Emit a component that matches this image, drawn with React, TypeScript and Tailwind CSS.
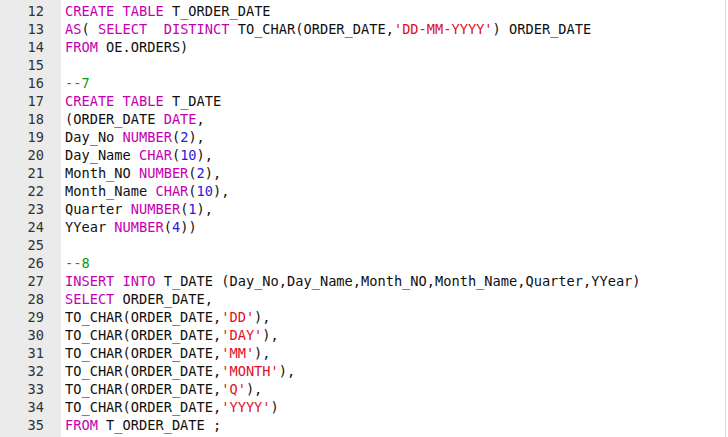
import React from "react";

type Tok = [string, string?];

const K = "k";
const N = "n";
const S = "s";
const C = "c";

const lines: { n: number; toks: Tok[] }[] = [
  { n: 12, toks: [["CREATE", K], [" "], ["TABLE", K], [" T_ORDER_DATE"]] },
  { n: 13, toks: [["AS", K], ["( "], ["SELECT", K], ["  "], ["DISTINCT", K], [" TO_CHAR(ORDER_DATE,"], ["'DD-MM-YYYY'", S], [") ORDER_DATE"]] },
  { n: 14, toks: [["FROM", K], [" OE.ORDERS)"]] },
  { n: 15, toks: [] },
  { n: 16, toks: [["--7", C]] },
  { n: 17, toks: [["CREATE", K], [" "], ["TABLE", K], [" T_DATE"]] },
  { n: 18, toks: [["(ORDER_DATE "], ["DATE", K], [","]] },
  { n: 19, toks: [["Day_No "], ["NUMBER", K], ["("], ["2", N], ["),"]] },
  { n: 20, toks: [["Day_Name "], ["CHAR", K], ["("], ["10", N], ["),"]] },
  { n: 21, toks: [["Month_NO "], ["NUMBER", K], ["("], ["2", N], ["),"]] },
  { n: 22, toks: [["Month_Name "], ["CHAR", K], ["("], ["10", N], ["),"]] },
  { n: 23, toks: [["Quarter "], ["NUMBER", K], ["("], ["1", N], ["),"]] },
  { n: 24, toks: [["YYear "], ["NUMBER", K], ["("], ["4", N], ["))"]] },
  { n: 25, toks: [] },
  { n: 26, toks: [["--8", C]] },
  { n: 27, toks: [["INSERT", K], [" "], ["INTO", K], [" T_DATE (Day_No,Day_Name,Month_NO,Month_Name,Quarter,YYear)"]] },
  { n: 28, toks: [["SELECT", K], [" ORDER_DATE,"]] },
  { n: 29, toks: [["TO_CHAR(ORDER_DATE,"], ["'DD'", S], ["),"]] },
  { n: 30, toks: [["TO_CHAR(ORDER_DATE,"], ["'DAY'", S], ["),"]] },
  { n: 31, toks: [["TO_CHAR(ORDER_DATE,"], ["'MM'", S], ["),"]] },
  { n: 32, toks: [["TO_CHAR(ORDER_DATE,"], ["'MONTH'", S], ["),"]] },
  { n: 33, toks: [["TO_CHAR(ORDER_DATE,"], ["'Q'", S], ["),"]] },
  { n: 34, toks: [["TO_CHAR(ORDER_DATE,"], ["'YYYY'", S], [")"]] },
  { n: 35, toks: [["FROM", K], [" T_ORDER_DATE ;"]] },
];

function cls(t?: string) {
  if (t === K) return "text-[#c400b0]";
  if (t === N) return "text-[#2a20d8]";
  if (t === S) return "text-[#e0102a]";
  if (t === C) return "text-[#0a9a10]";
  return "text-[#101010]";
}

export default function App() {
  return (
    <div
      className="flex w-[728px] h-[437px] bg-white overflow-hidden"
      style={{ fontFamily: '"DejaVu Sans Mono", monospace' }}
    >
      <div className="w-[61px] shrink-0 bg-[#ebebeb] pt-[2px] flex flex-col">
        {lines.map((l) => (
          <div
            key={l.n}
            className="h-[18px] leading-[18px] text-[13.66px] text-[#333333] text-right pr-[17px]"
          >
            {l.n}
          </div>
        ))}
      </div>
      <div className="flex-1 pt-[2px] pl-[4px] flex flex-col">
        {lines.map((l) => (
          <div
            key={l.n}
            className="h-[18px] leading-[18px] text-[13.66px] whitespace-pre"
          >
            {l.toks.map((t, i) => (
              <span key={i} className={cls(t[1])}>
                {t[0]}
              </span>
            ))}
          </div>
        ))}
      </div>
      <div className="w-[1px] shrink-0 bg-[#dcdcdc] mr-[2px]" />
    </div>
  );
}
